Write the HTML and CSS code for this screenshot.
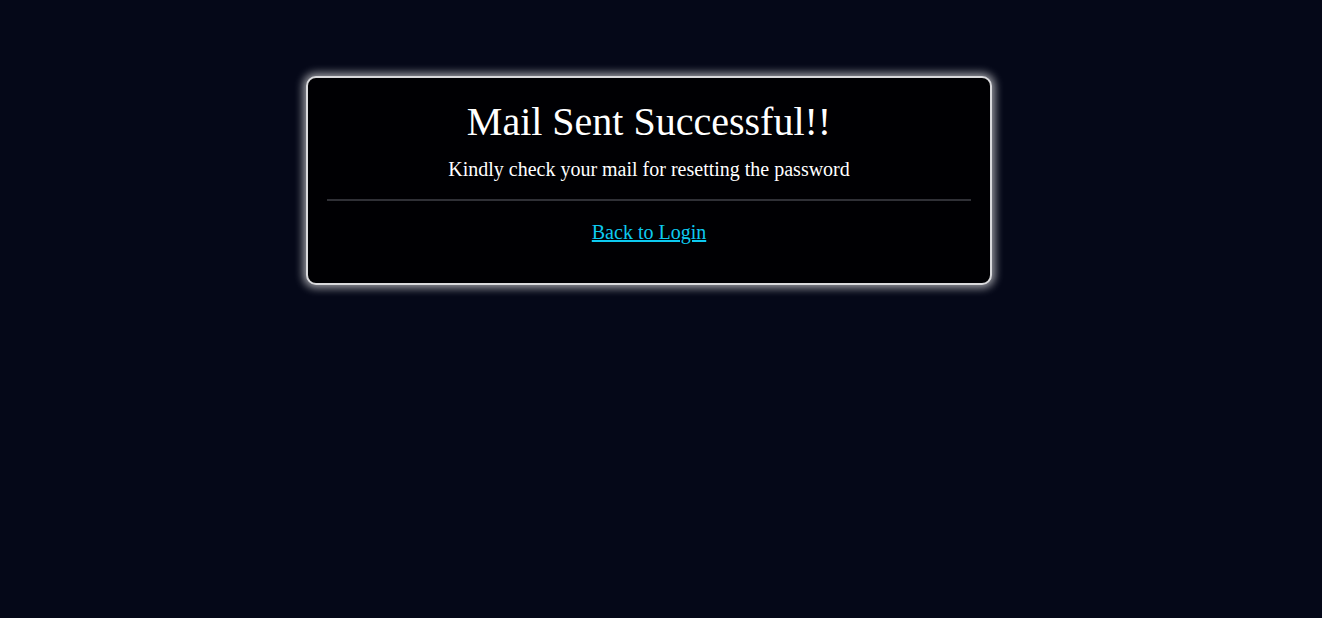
FILE: index.html
```html
<!DOCTYPE html>
<html lang="en">
<head>
<meta charset="utf-8">
<title>Mail Sent</title>
<link rel="stylesheet" href="styles.css">
</head>
<body>
<main class="page">
  <section class="card">
    <h1 class="title">Mail Sent Successful!!</h1>
    <p class="subtitle">Kindly check your mail for resetting the password</p>
    <hr class="divider">
    <p class="back"><a href="#" class="back-link">Back to Login</a></p>
  </section>
</main>
</body>
</html>
```

FILE: styles.css
```css
html, body {
  margin: 0;
  padding: 0;
  background: #050818;
  height: 100%;
}
body {
  font-family: "Liberation Serif", "Times New Roman", serif;
  color: #ffffff;
}
.page {
  display: flex;
  justify-content: center;
  align-items: flex-start;
  padding: 76px 24px 0 0;
}
.card {
  width: 686px;
  box-sizing: border-box;
  background: #000003;
  border: 2px solid #d9d9dc;
  border-radius: 10px;
  box-shadow: 0 0 8px 3px rgba(255, 255, 255, 0.6);
  padding: 20px 19px 20px;
  text-align: center;
}
.title {
  margin: 0;
  font-size: 40px;
  font-weight: normal;
  line-height: 48px;
}
.subtitle {
  margin: 8px 0 0;
  font-size: 20px;
  line-height: 30px;
}
.divider {
  margin: 15px 0 0;
  border: 0;
  height: 2px;
  background: #2f3036;
}
.back {
  margin: 16px 0 16px;
  font-size: 20px;
  line-height: 30px;
}
.back-link {
  color: #0dcaf0;
  text-decoration: underline;
}
```
